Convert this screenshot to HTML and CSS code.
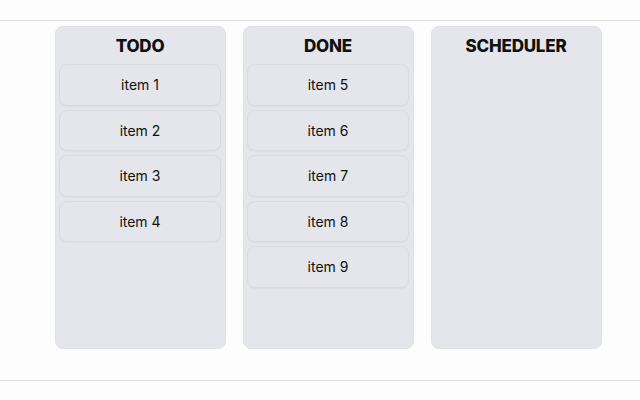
FILE: index.html
```html
<!DOCTYPE html>
<html>
<head>
<meta charset="utf-8">
<link rel="stylesheet" href="styles.css">
</head>
<body>
<div class="board">
  <div class="column">
    <h2 class="title">TODO</h2>
    <div class="list">
      <div class="item">item 1</div>
      <div class="item">item 2</div>
      <div class="item">item 3</div>
      <div class="item">item 4</div>
    </div>
  </div>
  <div class="column">
    <h2 class="title">DONE</h2>
    <div class="list">
      <div class="item">item 5</div>
      <div class="item">item 6</div>
      <div class="item">item 7</div>
      <div class="item">item 8</div>
      <div class="item">item 9</div>
    </div>
  </div>
  <div class="column">
    <h2 class="title">SCHEDULER</h2>
    <div class="list"></div>
  </div>
</div>
</body>
</html>
```
FILE: styles.css
```css
html, body {
  margin: 0;
  padding: 0;
  background: #fdfdfd;
  font-family: Inter, "Noto Sans", sans-serif;
  color: #111;
}
body {
  padding-top: 20px;
}
.board {
  display: flex;
  gap: 17px;
  border-top: 1px solid #dcdcdc;
  border-bottom: 1px solid #dcdcdc;
  padding: 5px 38px 30px 55px;
  height: 324px;
}
.column {
  width: 171px;
  height: 323px;
  background: #e5e6eb;
  border-radius: 8px;
  border: 1px solid #e0e1e6;
  box-sizing: border-box;
  padding: 0 4px 0 3px;
  display: flex;
  flex-direction: column;
}
.title {
  margin: 0;
  height: 37px;
  display: flex;
  align-items: center;
  justify-content: center;
  font-size: 17px;
  font-weight: 800;
  letter-spacing: -0.2px;
  padding-top: 1px;
  box-sizing: border-box;
}
.list {
  display: flex;
  flex-direction: column;
  gap: 4px;
}
.item {
  height: 41.5px;
  box-sizing: border-box;
  border: 1px solid #dadbe0;
  border-radius: 8px;
  background: #e5e6eb;
  box-shadow: 0 1px 1px rgba(0,0,0,0.03);
  display: flex;
  align-items: center;
  justify-content: center;
  font-size: 14px;
}
```
